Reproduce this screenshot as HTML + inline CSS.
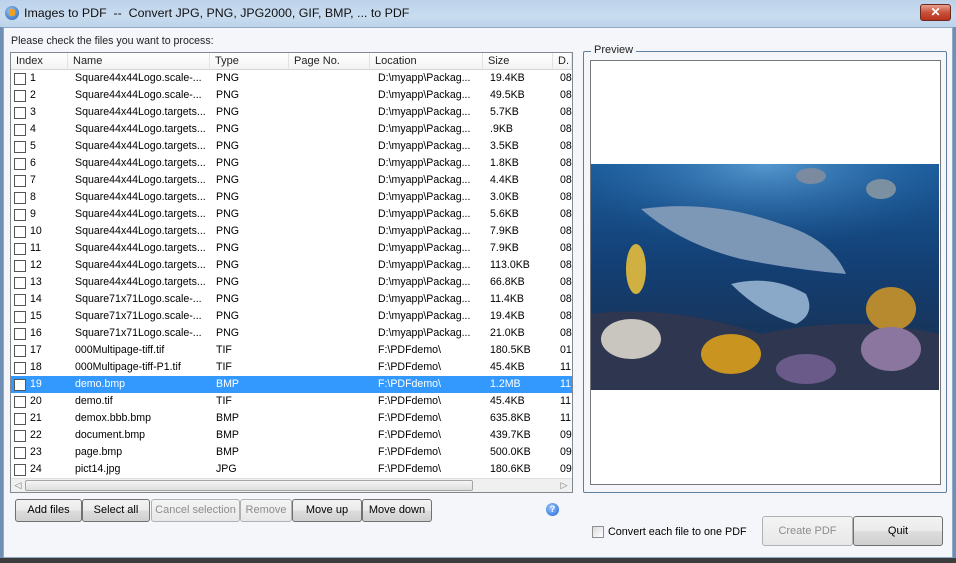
<!DOCTYPE html>
<html><head><meta charset="utf-8"><style>
*{margin:0;padding:0;box-sizing:border-box}
body{width:956px;height:563px;overflow:hidden;background:#6f8fb5;font-family:"Liberation Sans",sans-serif;font-size:11px;color:#000;position:relative}
.a{position:absolute}
#title{left:0;top:0;width:956px;height:27px;background:linear-gradient(#bcd2ea,#c9dcf0 60%,#bcd3ea)}
#client{left:3px;top:27px;width:950px;height:531px;background:#f4f6f9;border:1px solid #8fa9c7}
#list{left:10px;top:52px;width:563px;height:441px;background:#fff;border:1px solid #828790}
.hd{top:0;height:17px;border-right:1px solid #e3e3e3;border-bottom:1px solid #d5d5d5;padding-left:5px;line-height:16px;background:linear-gradient(#fff,#f3f3f3);color:#222}
.row{left:0;width:561px;height:17px;line-height:17px;font-size:10.6px}
.row span{position:absolute;white-space:nowrap}
.cb{position:absolute;left:3px;top:3px;width:12px;height:12px;border:1px solid #555;background:#fff}
.sel{background:#3399ff;color:#fff}
.btn{top:499px;height:23px;border:1px solid #707070;border-radius:3px;background:linear-gradient(#f2f2f2,#ebebeb 50%,#dddddd 51%,#cfcfcf);text-align:center;line-height:21px;font-size:11px}
.dis{color:#8d8d8d;border-color:#adb2b5;background:linear-gradient(#f4f4f4,#e8e8e8)}
</style></head><body>
<div id="title" class="a">
  <div class="a" style="left:5px;top:6px;width:14px;height:14px;border-radius:50%;background:radial-gradient(circle at 40% 35%,#9cc3f0,#1f5fb3);"></div>
  <div class="a" style="left:9px;top:9px;width:6px;height:7px;background:#f0a020;border-radius:2px"></div>
  <div class="a" style="left:24px;top:6px;font-size:12.4px;color:#111">Images to PDF &nbsp;-- &nbsp;Convert JPG, PNG, JPG2000, GIF, BMP, ... to PDF</div>
  <div class="a" style="left:920px;top:4px;width:31px;height:17px;border:1px solid #6b2b20;border-radius:3px;background:linear-gradient(#e8a08f,#c8513a 50%,#b8321b);color:#fff;text-align:center;font-size:12px;font-weight:bold;line-height:15px">✕</div>
</div>
<div id="client" class="a"></div>
<div class="a" style="left:11px;top:35px;color:#222;font-size:10.6px">Please check the files you want to process:</div>
<div id="list" class="a">
  <div class="a hd" style="left:0;width:57px">Index</div>
  <div class="a hd" style="left:57px;width:142px">Name</div>
  <div class="a hd" style="left:199px;width:79px">Type</div>
  <div class="a hd" style="left:278px;width:81px">Page No.</div>
  <div class="a hd" style="left:359px;width:113px">Location</div>
  <div class="a hd" style="left:472px;width:70px">Size</div>
  <div class="a hd" style="left:542px;width:19px">D.</div>
  <div id="rows"></div>
  <div class="a" style="left:0;top:425px;width:561px;height:14px;background:#f0f0f0;border-top:1px solid #e0e0e0"></div>
  <div class="a" style="left:0;top:426px;width:14px;height:13px;color:#777;font-size:9px;text-align:center;line-height:13px">◁</div>
  <div class="a" style="left:14px;top:427px;width:448px;height:11px;border:1px solid #a5a5a5;border-radius:2px;background:linear-gradient(#f5f5f5,#dedede)"></div>
  <div class="a" style="left:546px;top:426px;width:14px;height:13px;color:#777;font-size:9px;text-align:center;line-height:13px">▷</div>
</div>
<div class="a" style="left:583px;top:51px;width:364px;height:442px;border:1px solid #5f7fa0;border-radius:2px"></div>
<div class="a" style="left:591px;top:44px;padding:0 3px;background:#f4f6f9;color:#222">Preview</div>
<div class="a" style="left:590px;top:60px;width:351px;height:425px;background:#fff;border:1px solid #777"></div>
<svg class="a" style="left:591px;top:164px" width="348" height="226" viewBox="0 0 348 226">
<defs><linearGradient id="g" x1="0" y1="0" x2="0" y2="1"><stop offset="0" stop-color="#1a5a98"/><stop offset=".45" stop-color="#133f74"/><stop offset="1" stop-color="#1a2d48"/></linearGradient>
<radialGradient id="l" cx=".5" cy="0" r=".6"><stop offset="0" stop-color="#6fb2e6" stop-opacity=".7"/><stop offset="1" stop-color="#2a6fb3" stop-opacity="0"/></radialGradient></defs>
<rect width="348" height="226" fill="url(#g)"/><rect width="348" height="140" fill="url(#l)"/>
<path d="M50 45 Q120 35 190 60 Q240 75 255 110 Q200 105 150 95 Q90 80 50 45Z" fill="#7d97b6"/>
<path d="M140 120 Q180 110 215 130 Q225 150 205 160 Q170 150 140 120Z" fill="#8aa8c8"/>
<path d="M0 150 Q80 140 170 170 Q260 150 348 170 L348 226 L0 226Z" fill="#2e3650"/>
<ellipse cx="140" cy="190" rx="30" ry="20" fill="#c99520"/><ellipse cx="40" cy="175" rx="30" ry="20" fill="#c9c6c0"/>
<ellipse cx="300" cy="145" rx="25" ry="22" fill="#b88a30"/><ellipse cx="300" cy="185" rx="30" ry="22" fill="#8b76a0"/>
<ellipse cx="215" cy="205" rx="30" ry="15" fill="#6a5a8a"/><ellipse cx="45" cy="105" rx="10" ry="25" fill="#d0b040"/>
<ellipse cx="290" cy="25" rx="15" ry="10" fill="#7b90a0"/><ellipse cx="220" cy="12" rx="15" ry="8" fill="#7a8aa0"/>
</svg>
<div class="a btn" style="left:15px;width:67px">Add files</div>
<div class="a btn" style="left:82px;width:68px">Select all</div>
<div class="a btn dis" style="left:151px;width:89px">Cancel selection</div>
<div class="a btn dis" style="left:240px;width:52px">Remove</div>
<div class="a btn" style="left:292px;width:70px">Move up</div>
<div class="a btn" style="left:362px;width:70px">Move down</div>
<div class="a" style="left:546px;top:503px;width:13px;height:13px;border-radius:50%;background:radial-gradient(circle at 40% 35%,#9cc8ff,#1d62d8);color:#fff;font-size:9px;font-weight:bold;text-align:center;line-height:13px">?</div>
<div class="a" style="left:592px;top:526px;width:12px;height:12px;border:1px solid #8f8f8f;background:linear-gradient(135deg,#dcdcdc,#fff)"></div>
<div class="a" style="left:608px;top:526px;font-size:10.8px">Convert each file to one PDF</div>
<div class="a btn dis" style="left:762px;top:516px;width:91px;height:30px;line-height:28px">Create PDF</div>
<div class="a btn" style="left:853px;top:516px;width:90px;height:30px;line-height:28px">Quit</div>
<div class="a" style="left:0;top:558px;width:956px;height:5px;background:#3c3c3c"></div>
<script>
var d=[["Square44x44Logo.scale-...","PNG","D:\\myapp\\Packag...","19.4KB","08"],["Square44x44Logo.scale-...","PNG","D:\\myapp\\Packag...","49.5KB","08"],["Square44x44Logo.targets...","PNG","D:\\myapp\\Packag...","5.7KB","08"],["Square44x44Logo.targets...","PNG","D:\\myapp\\Packag...",".9KB","08"],["Square44x44Logo.targets...","PNG","D:\\myapp\\Packag...","3.5KB","08"],["Square44x44Logo.targets...","PNG","D:\\myapp\\Packag...","1.8KB","08"],["Square44x44Logo.targets...","PNG","D:\\myapp\\Packag...","4.4KB","08"],["Square44x44Logo.targets...","PNG","D:\\myapp\\Packag...","3.0KB","08"],["Square44x44Logo.targets...","PNG","D:\\myapp\\Packag...","5.6KB","08"],["Square44x44Logo.targets...","PNG","D:\\myapp\\Packag...","7.9KB","08"],["Square44x44Logo.targets...","PNG","D:\\myapp\\Packag...","7.9KB","08"],["Square44x44Logo.targets...","PNG","D:\\myapp\\Packag...","113.0KB","08"],["Square44x44Logo.targets...","PNG","D:\\myapp\\Packag...","66.8KB","08"],["Square71x71Logo.scale-...","PNG","D:\\myapp\\Packag...","11.4KB","08"],["Square71x71Logo.scale-...","PNG","D:\\myapp\\Packag...","19.4KB","08"],["Square71x71Logo.scale-...","PNG","D:\\myapp\\Packag...","21.0KB","08"],["000Multipage-tiff.tif","TIF","F:\\PDFdemo\\","180.5KB","01"],["000Multipage-tiff-P1.tif","TIF","F:\\PDFdemo\\","45.4KB","11"],["demo.bmp","BMP","F:\\PDFdemo\\","1.2MB","11"],["demo.tif","TIF","F:\\PDFdemo\\","45.4KB","11"],["demox.bbb.bmp","BMP","F:\\PDFdemo\\","635.8KB","11"],["document.bmp","BMP","F:\\PDFdemo\\","439.7KB","09"],["page.bmp","BMP","F:\\PDFdemo\\","500.0KB","09"],["pict14.jpg","JPG","F:\\PDFdemo\\","180.6KB","09"]];
var h="";d.forEach(function(r,i){h+='<div class="a row'+(i==18?' sel':'')+'" style="top:'+(17+i*17)+'px"><div class="cb"></div><span style="left:19px">'+(i+1)+'</span><span style="left:64px">'+r[0]+'</span><span style="left:205px">'+r[1]+'</span><span style="left:367px">'+r[2]+'</span><span style="left:479px">'+r[3]+'</span><span style="left:549px">'+r[4]+'</span></div>';});
document.getElementById("rows").innerHTML=h;
</script>
</body></html>
